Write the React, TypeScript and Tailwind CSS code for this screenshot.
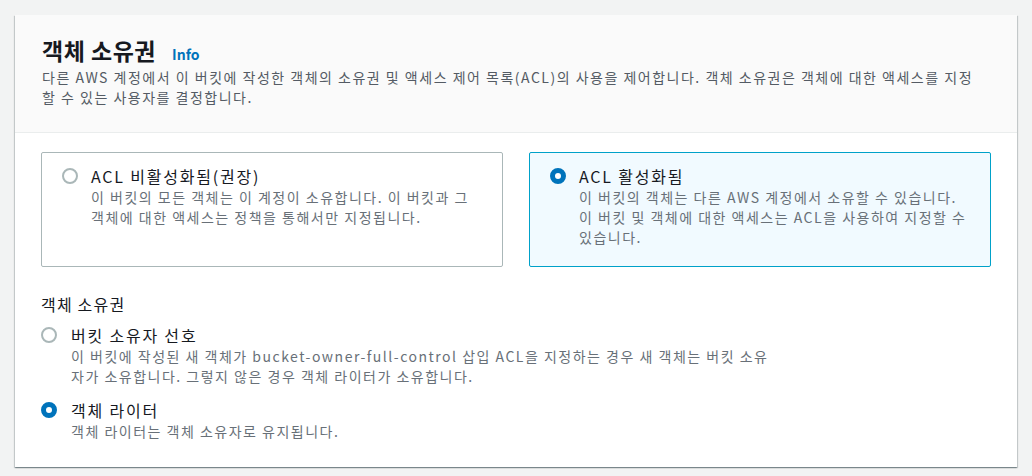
const FONT = { fontFamily: '"Noto Sans CJK KR", "Noto Sans", sans-serif' };

function Radio({ checked }: { checked: boolean }) {
  return checked ? (
    <span className="block w-4 h-4 shrink-0 rounded-full border-[5px] border-[#0073bb] bg-white" />
  ) : (
    <span className="block w-4 h-4 shrink-0 rounded-full border-2 border-[#aab7b8] bg-white" />
  );
}

function Tile({ title, desc, checked }: { title: string; desc: string; checked: boolean }) {
  return (
    <div
      className={`flex items-start gap-[13px] rounded-[2px] border px-5 pt-[12px] pb-[19px] ${
        checked ? "border-[#00a1c9] bg-[#f1faff]" : "border-[#aab7b8] bg-white"
      }`}
    >
      <div className="h-[22px] flex items-center">
        <Radio checked={checked} />
      </div>
      <div>
        <div className="text-[16px] leading-[22px] text-[#16191f] tracking-[1.8px]">{title}</div>
        <div className="text-[14px] leading-[20px] text-[#687078] tracking-[1.5px]">{desc}</div>
      </div>
    </div>
  );
}

export default function App() {
  return (
    <div className="min-h-[476px] w-full bg-[#f2f3f3] px-[15px] pt-[15px] pb-[9px]" style={FONT}>
      <div className="bg-white shadow-[0_1px_1px_0_rgba(0,28,36,0.3),1px_1px_1px_0_rgba(0,28,36,0.15),-1px_1px_1px_0_rgba(0,28,36,0.15)]">
        {/* Header */}
        <div className="bg-[#fafafa] border-b border-[#eaeded] px-[27px] pt-[21px] pb-[25px]">
          <div className="flex items-baseline">
            <h2 className="text-[23px] leading-[28px] font-bold text-[#16191f] tracking-[0.5px]">객체 소유권</h2>
            <a className="ml-4 text-[14px] font-bold text-[#0073bb]">Info</a>
          </div>
          <p className="mt-[2px] max-w-[935px] text-[14px] leading-[20px] text-[#545b64] tracking-[1.5px]">
            다른 AWS 계정에서 이 버킷에 작성한 객체의 소유권 및 액세스 제어 목록(ACL)의 사용을 제어합니다. 객체 소유권은 객체에 대한 액세스를 지정할 수 있는 사용자를 결정합니다.
          </p>
        </div>

        {/* Body */}
        <div className="px-[26px] pt-[19px] pb-[26px]">
          <div className="grid grid-cols-2 gap-[26px]">
            <Tile
              checked={false}
              title="ACL 비활성화됨(권장)"
              desc="이 버킷의 모든 객체는 이 계정이 소유합니다. 이 버킷과 그 객체에 대한 액세스는 정책을 통해서만 지정됩니다."
            />
            <Tile
              checked={true}
              title="ACL 활성화됨"
              desc="이 버킷의 객체는 다른 AWS 계정에서 소유할 수 있습니다. 이 버킷 및 객체에 대한 액세스는 ACL을 사용하여 지정할 수 있습니다."
            />
          </div>

          <div className="mt-[26px] text-[16px] leading-[22px] text-[#16191f] tracking-[1.2px]">객체 소유권</div>

          <div className="mt-[9px] flex items-start gap-[14px]">
            <div className="h-[22px] flex items-center">
              <Radio checked={false} />
            </div>
            <div className="w-[705px]">
              <div className="text-[16px] leading-[22px] text-[#16191f] tracking-[1.8px]">버킷 소유자 선호</div>
              <div className="text-[14px] leading-[20px] text-[#687078] tracking-[1.5px]">
                이 버킷에 작성된 새 객체가 bucket-owner-full-control 삽입 ACL을 지정하는 경우 새 객체는 버킷 소유자가 소유합니다. 그렇지 않은 경우 객체 라이터가 소유합니다.
              </div>
            </div>
          </div>

          <div className="mt-[13px] flex items-start gap-[14px]">
            <div className="h-[22px] flex items-center">
              <Radio checked={true} />
            </div>
            <div>
              <div className="text-[16px] leading-[22px] text-[#16191f] tracking-[1.8px]">객체 라이터</div>
              <div className="text-[14px] leading-[20px] text-[#687078] tracking-[1.5px]">
                객체 라이터는 객체 소유자로 유지됩니다.
              </div>
            </div>
          </div>
        </div>
      </div>
    </div>
  );
}
